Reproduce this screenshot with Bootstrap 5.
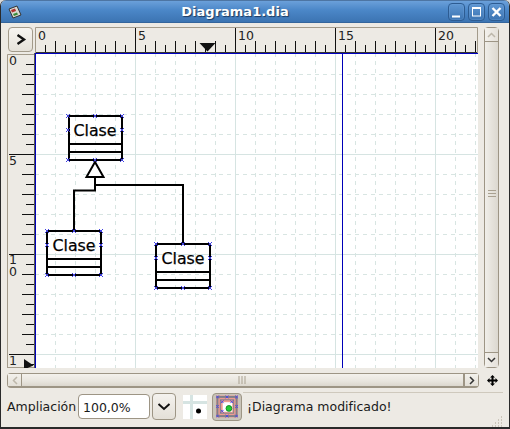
<!DOCTYPE html>
<html lang="es">
<head>
<meta charset="UTF-8">
<meta name="viewport" content="width=device-width, initial-scale=1.0">
<title>Diagrama1.dia</title>
<link href="https://cdn.jsdelivr.net/npm/bootstrap@5.3.0/dist/css/bootstrap.min.css" rel="stylesheet">
<style>
    html, body { background: #d9d9d9; overflow: hidden; }
    body { font-family: "DejaVu Sans", sans-serif; font-size: 12.5px; color: #1a1a1a; }
    svg { display: block; }
    svg text { font-family: "DejaVu Sans", sans-serif; }

    .dia-window { width: 510px; height: 429px; background: #edeae4; border: 1px solid #2a2a2a; border-top: 0; border-bottom-width: 2px; border-radius: 6px 6px 0 0; overflow: hidden; }
    .dia-title { height: 23px; background: linear-gradient(#2f4a6c 0, #6ba0da 1px, #4b87c8 10px, #3c74b2 22px, #2c5686 23px); padding-right: 4px; }
    .dia-title-text { left: 0; right: 40px; font-size: 13px; font-weight: 700; line-height: 23px; color: #fff; text-align: center; text-shadow: 1px 1px 1px #1d3a5e; }
    .dia-wbtn { width: 17px; height: 18px; margin-left: 3px; border: 1px solid #2d5c92; border-radius: 4px; background: linear-gradient(#5f97d3, #3c74b2); box-shadow: inset 0 0 0 1px #6fa3da55; }

    .dia-work { display: grid; grid-template-columns: 28px 443px 15px; grid-template-rows: 26px 315px; column-gap: 0; padding: 4px 0 0 6px; }
    .dia-corner { width: 25px; height: 25px; margin-left: 1px; padding: 0; border: 1px solid #a39b8b; border-radius: 4px; background: linear-gradient(#f6f4f0, #e6e2da); }
    .dia-vscroll { grid-column: 3; grid-row: 1 / 3; margin-left: 6px; width: 15px; border: 1px solid #9d9585; border-radius: 4px; }
    .dia-ruler { background: #edeae4; }
    .dia-vthumb { background: linear-gradient(90deg, #f0eee9, #e6e3dc 50%, #dcd8d0); }
    .dia-vthumb svg { margin-bottom: 8px; }
    .dia-sbtn { height: 14px; flex: none; background: linear-gradient(90deg, #f3f1ec, #e5e1da); }
    .dia-vscroll .dia-sbtn:first-child { border-bottom: 1px solid #9d9585; }
    .dia-vscroll .dia-sbtn:last-child { height: 15px; border-top: 1px solid #9d9585; }

    .dia-hrow { height: 15px; margin: 5px 0 4px 6px; }
    .dia-hscroll { width: 472px; border: 1px solid #9d9585; border-bottom-width: 2px; border-radius: 4px; }
    .dia-hthumb { background: linear-gradient(#f3f1ec, #e8e5de 60%, #dbd7ce); }
    .dia-hthumb svg { margin-right: 2px; }
    .dia-hbtn { width: 14px; flex: none; background: linear-gradient(#f3f1ec, #e3dfd7); }
    .dia-hscroll .dia-hbtn:first-child { border-right: 1px solid #9d9585; }
    .dia-hscroll .dia-hbtn:last-child { border-left: 2px solid #9d9585; width: 15px; }
    .dia-move { margin-left: 8px; }

    .dia-bottom { height: 35px; padding: 0 6px 6px 6px; }
    .dia-label { width: 71px; white-space: nowrap; margin-top: 2px; }
    .dia-zoom { width: 72px; height: 25px; padding: 1px 4px 0; font-size: 12.5px; font-family: "DejaVu Sans", sans-serif; color: #1a1a1a; border: 1px solid #9d9585; border-radius: 4px; }
    .dia-drop { width: 24px; height: 27px; margin-left: 2px; padding: 0; border: 1px solid #9d9585; border-radius: 4px; background: linear-gradient(#f4f2ee, #e4e0d8); }
    .dia-snap { margin-left: 7px; }
    .dia-toggle { width: 30px; height: 28px; margin-left: 5px; padding: 3px; border: 1px solid #9d9585; border-radius: 4px; background: #c9c4b9; }
    .dia-status { margin-left: 1px; flex: 1; align-self: stretch; border-top: 1px solid #cfc9bd; padding-left: 4px; white-space: nowrap; }
    .dia-grip { right: 0; bottom: -6px; }
</style>
</head>
<body>
    <div class="dia-window d-flex flex-column">
        <div class="dia-title d-flex align-items-center position-relative">
            <svg class="ms-1" width="18" height="16" viewBox="0 0 18 16">
                <path d="M4 5 L12 2 L16 11 L8 14 Z" fill="#d8d8d0" stroke="#333"/>
                <path d="M6 6 L10 4.500 L11 7 L7 8.500 Z" fill="#b03030"/>
                <path d="M8 10 L12 8.500 L13 10.500 L9 12 Z" fill="#3a8a3a"/>
            </svg>
            <div class="dia-title-text position-absolute">Diagrama1.dia</div>
            <div class="ms-auto d-flex position-relative">
                <div class="dia-wbtn"><svg width="15" height="16" viewBox="0 0 15 16"><path d="M3 12.500 H11" stroke="#fff" stroke-width="2"/></svg></div>
                <div class="dia-wbtn"><svg width="15" height="16" viewBox="0 0 15 16"><rect x="3.500" y="3.500" width="8" height="8.500" fill="none" stroke="#fff"/><path d="M3 4 H12" stroke="#fff" stroke-width="2"/></svg></div>
                <div class="dia-wbtn"><svg width="15" height="16" viewBox="0 0 15 16"><path d="M3.500 4 L11.500 12 M11.500 4 L3.500 12" stroke="#fff" stroke-width="2.400"/></svg></div>
            </div>
        </div>

        <div class="dia-work">
            <button type="button" class="btn dia-corner d-flex align-items-center justify-content-center">
                <svg width="23" height="23" viewBox="0 0 23 23"><path d="M8.500 7 L15 11.500 L8.500 16" fill="none" stroke="#111" stroke-width="2.400"/></svg>
            </button>
            <svg id="ruler-top" class="dia-ruler" width="443" height="26" viewBox="35 27 443 26">
                <path d="M35.500 53 V27.500 H477.500 V53" fill="none" stroke="#a39b8b"/>
                <path id="ruler-top-ticks" fill="none" stroke="#111"/>
                <path d="M36 52.500 H477" stroke="#333"/>
                <g font-size="12.500" fill="#222">
                    <text x="38" y="40">0</text>
                    <text x="138" y="40">5</text>
                    <text x="238" y="40">10</text>
                    <text x="338" y="40">15</text>
                    <text x="438" y="40">20</text>
                </g>
                <path d="M199.500 43 H215.500 L207.500 51.500 Z" fill="#111"/>
            </svg>
            <div class="dia-vscroll d-flex flex-column">
                <div class="dia-sbtn d-flex justify-content-center align-items-center">
                    <svg width="9" height="6" viewBox="0 0 9 6"><path d="M1 5 L4.500 1.500 L8 5" fill="none" stroke="#bdb7aa" stroke-width="1.500"/></svg>
                </div>
                <div class="dia-vthumb flex-grow-1 d-flex align-items-center justify-content-center">
                    <svg width="8" height="8" viewBox="0 0 8 8"><path d="M0 1.500 H8 M0 4.500 H8 M0 7.500 H8" stroke="#a9a190"/></svg>
                </div>
                <div class="dia-sbtn d-flex justify-content-center align-items-center">
                    <svg width="9" height="6" viewBox="0 0 9 6"><path d="M1 1 L4.500 4.500 L8 1" fill="none" stroke="#333" stroke-width="1.500"/></svg>
                </div>
            </div>

            <svg id="ruler-left" class="dia-ruler" width="28" height="315" viewBox="7 53 28 315">
                <path d="M7.500 368 V54.500 H34" fill="none" stroke="#a39b8b"/>
                <path d="M7 367.500 H35" stroke="#a39b8b"/>
                <path id="ruler-left-ticks" fill="none" stroke="#111"/>
                <path d="M34.500 53 V368" stroke="#555"/>
                <g font-size="12.500" fill="#222">
                    <text x="9" y="65">0</text>
                    <text x="9" y="165">5</text>
                    <text x="9" y="264">1</text>
                    <text x="9" y="276">0</text>
                    <text x="9" y="365">1</text>
                </g>
                <path d="M24 359 L33.500 365.500 L27.500 368 H24 Z" fill="#111"/>
            </svg>

            <svg id="canvas" class="bg-white" width="443" height="315" viewBox="35 53 443 315">
                <path id="grid-minor" fill="none" stroke="#d8e5e2" stroke-dasharray="4 4"/>
                <path id="grid-major" fill="none" stroke="#d6e4e2"/>
                <path d="M342.500 53 V368" stroke="#0000b8"/>
                <path d="M35 53.500 H478 M35.500 53 V368" stroke="#0000c0"/>

                <g fill="none" stroke="#000" stroke-width="2">
                    <path d="M95 177 V185 H183 V244"/>
                    <path d="M95 177 V190.500 H74 V231"/>
                    <path d="M95 162 L103.500 177 H86.500 Z" fill="#fff"/>
                </g>

                <g id="classes" font-size="15.800" fill="#000" stroke="#000" stroke-width="0.250" text-anchor="middle">
                    <text x="95" y="135.500">Clase</text>
                    <text x="74" y="250.500">Clase</text>
                    <text x="183" y="263.500">Clase</text>
                </g>
                <g fill="none" stroke="#000" stroke-width="2">
                    <path d="M69 116 H122 V160 H69 Z M69 144 H122 M69 152 H122"/>
                    <path d="M47 231 H101 V275 H47 Z M47 259 H101 M47 267 H101"/>
                    <path d="M156 244 H210 V288 H156 Z M156 272 H210 M156 280 H210"/>
                </g>
                <path id="handles" fill="none" stroke="#4040e0"/>
            </svg>
        </div>

        <div class="dia-hrow d-flex align-items-center">
            <div class="dia-hscroll d-flex h-100">
                <div class="dia-hbtn d-flex justify-content-center align-items-center">
                    <svg width="6" height="9" viewBox="0 0 6 9"><path d="M5 1 L1.500 4.500 L5 8" fill="none" stroke="#bdb7aa" stroke-width="1.500"/></svg>
                </div>
                <div class="dia-hthumb flex-grow-1 d-flex align-items-center justify-content-center">
                    <svg width="8" height="8" viewBox="0 0 8 8"><path d="M1 0 V8 M4 0 V8 M7 0 V8" stroke="#a9a190"/></svg>
                </div>
                <div class="dia-hbtn d-flex justify-content-center align-items-center">
                    <svg width="6" height="9" viewBox="0 0 6 9"><path d="M1 1 L4.500 4.500 L1 8" fill="none" stroke="#333" stroke-width="1.500"/></svg>
                </div>
            </div>
            <svg class="dia-move" width="11" height="11" viewBox="0 0 11 11">
                <path d="M5.500 0 L8 2.500 H6.500 V4.500 H8.500 V3 L11 5.500 L8.500 8 V6.500 H6.500 V8.500 H8 L5.500 11 L3 8.500 H4.500 V6.500 H2.500 V8 L0 5.500 L2.500 3 V4.500 H4.500 V2.500 H3 Z" fill="#000"/>
            </svg>
        </div>

        <div class="dia-bottom d-flex align-items-center">
            <span class="dia-label">Ampliación</span>
            <input type="text" class="form-control dia-zoom" value="100,0%">
            <button type="button" class="btn dia-drop d-flex align-items-center justify-content-center">
                <svg width="14" height="8" viewBox="0 0 14 8"><path d="M1.500 1 L7 6 L12.500 1" fill="none" stroke="#111" stroke-width="2"/></svg>
            </button>
            <svg class="dia-snap bg-white" width="24" height="24" viewBox="0 0 24 24">
                <path d="M8.500 0 V24 M0 7.500 H24" stroke="#d6e4e2" stroke-width="3"/>
                <circle cx="15.500" cy="16" r="2.500" fill="#000"/>
            </svg>
            <button type="button" class="btn dia-toggle d-flex align-items-center justify-content-center">
                <svg width="23" height="23" viewBox="0 0 23 23">
                    <rect width="23" height="23" fill="#ee9c92"/>
                    <rect x="1.500" y="1.500" width="20" height="20" fill="none" stroke="#7f7f8a" stroke-width="2"/>
                    <rect x="4.500" y="4.500" width="14" height="14" fill="none" stroke="#7f7f8a"/>
                    <rect x="7" y="7" width="10" height="10" fill="#fff"/>
                    <path d="M0 0 L3 3 M3 0 L0 3 M10 0 L13 3 M13 0 L10 3 M20 0 L23 3 M23 0 L20 3 M0 10 L3 13 M3 10 L0 13 M20 10 L23 13 M23 10 L20 13 M0 20 L3 23 M3 20 L0 23 M10 20 L13 23 M13 20 L10 23 M20 20 L23 23 M23 20 L20 23 M5 5 L8 8 M8 5 L5 8 M15 5 L18 8 M18 5 L15 8 M5 15 L8 18 M8 15 L5 18" stroke="#4a4ae0"/>
                    <circle cx="13.500" cy="13.500" r="3" fill="#22cc33" stroke="#118822"/>
                </svg>
            </button>
            <div class="dia-status d-flex align-items-center position-relative">
                ¡Diagrama modificado!
                <svg class="dia-grip position-absolute" width="11" height="11" viewBox="0 0 11 11">
                    <path d="M9 1 h1 M6 4 h1 M9 4 h1 M3 7 h1 M6 7 h1 M9 7 h1 M0 10 h1 M3 10 h1 M6 10 h1 M9 10 h1" stroke="#a9a190"/>
                </svg>
            </div>
        </div>
    </div>

    <script>
        // ruler ticks
        let top_d = "";
        for (let x = 45; x < 478; x += 10) {
            const rel = x - 35;
            const y0 = rel % 100 === 0 ? 28 : (rel % 20 === 0 ? 41 : 45);
            top_d += `M${x + 0.5} ${y0} V52 `;
        }
        document.getElementById("ruler-top-ticks").setAttribute("d", top_d);

        let left_d = "";
        for (let y = 64; y < 368; y += 10) {
            const rel = y - 54;
            const x0 = rel % 100 === 0 ? 9 : (rel % 20 === 0 ? 22 : 26);
            left_d += `M${x0} ${y + 0.5} H34 `;
        }
        document.getElementById("ruler-left-ticks").setAttribute("d", left_d);

        // canvas grid
        let minor = "", major = "";
        for (let x = 55; x < 478; x += 20) {
            if ((x - 35) % 100 === 0) major += `M${x + 0.5} 53 V368 `;
            else minor += `M${x + 0.5} 53 V368 `;
        }
        for (let y = 74; y < 368; y += 20) {
            if ((y - 54) % 100 === 0) major += `M35 ${y + 0.5} H478 `;
            else minor += `M35 ${y + 0.5} H478 `;
        }
        document.getElementById("grid-minor").setAttribute("d", minor);
        document.getElementById("grid-major").setAttribute("d", major);

        // connection points of the three class boxes
        const boxes = [[68, 116, 122, 160, 130], [47, 231, 101, 275, 245], [156, 244, 210, 288, 258]];
        let marks = "";
        boxes.forEach(([l, t, r, b, m]) => {
            const c = (l + r) / 2;
            [[l, t], [c, t], [r, t], [l, m], [r, m], [l, b], [c, b], [r, b]].forEach(([x, y]) => {
                marks += `M${x - 2} ${y - 2} L${x + 2} ${y + 2} M${x + 2} ${y - 2} L${x - 2} ${y + 2} `;
            });
        });
        document.getElementById("handles").setAttribute("d", marks);
    </script>
    <script src="https://cdn.jsdelivr.net/npm/bootstrap@5.3.0/dist/js/bootstrap.bundle.min.js"></script>
</body>
</html>
